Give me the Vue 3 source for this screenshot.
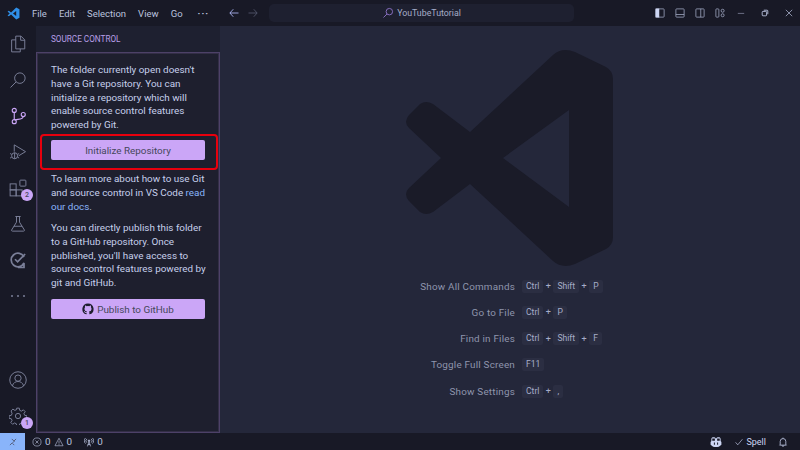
<script setup>
const menus = ['File', 'Edit', 'Selection', 'View', 'Go']

const shortcuts = [
  { label: 'Show All Commands', keys: ['Ctrl', 'Shift', 'P'] },
  { label: 'Go to File', keys: ['Ctrl', 'P'] },
  { label: 'Find in Files', keys: ['Ctrl', 'Shift', 'F'] },
  { label: 'Toggle Full Screen', keys: ['F11'] },
  { label: 'Show Settings', keys: ['Ctrl', ','] },
]
</script>

<template>
  <div class="window">
    <header class="titlebar">
      <svg class="app-logo" viewBox="0 0 24 24">
        <path fill="#2f8fe8" d="M17 1 23 4v16l-6 3L7.500 13.800l-4 3.200L1 15.500 5 12 1 8.500 3.500 7l4 3.200z" />
        <path fill="#181926" d="M17 7.500 11 12l6 4.500z" />
      </svg>
      <nav class="menu">
        <span v-for="item in menus" :key="item">{{ item }}</span>
        <span class="menu-more">···</span>
      </nav>
      <div class="nav-arrows">
        <svg viewBox="0 0 16 16" fill="none" stroke="#b4befe" stroke-width="1.100"><path d="M14 8H2.500M7 3 2.500 8 7 13" /></svg>
        <svg viewBox="0 0 16 16" fill="none" stroke="#565a70" stroke-width="1.100"><path d="M2 8h11.500M9 3l4.500 5L9 13" /></svg>
      </div>
      <div class="command-center">
        <svg viewBox="0 0 16 16" fill="none" stroke="#8f74c9" stroke-width="1.200"><circle cx="9.800" cy="6.200" r="4.300" /><path d="M6.700 9.300 2 14" /></svg>
        <span>YouTubeTutorial</span>
      </div>
      <div class="layout-icons">
        <svg viewBox="0 0 16 16" fill="none" stroke="#a6adc8"><rect x="2.500" y="2.500" width="11" height="11" rx="1" /><rect x="2" y="2" width="5" height="12" fill="#cdd6f4" stroke="none" /></svg>
        <svg viewBox="0 0 16 16" fill="none" stroke="#a6adc8"><rect x="2.500" y="2.500" width="11" height="11" rx="1" /><path d="M2.500 10h11" /></svg>
        <svg viewBox="0 0 16 16" fill="none" stroke="#a6adc8"><rect x="2.500" y="2.500" width="11" height="11" rx="1" /><path d="M9 2.500v11" /></svg>
        <svg viewBox="0 0 16 16" fill="none" stroke="#a6adc8"><rect x="2.500" y="2.500" width="4" height="11" rx="1" /><circle cx="11.500" cy="5" r="2" /><circle cx="11.500" cy="11" r="2" /></svg>
      </div>
      <div class="window-controls">
        <svg viewBox="0 0 10 10" fill="none" stroke="#7f849c"><path d="M1 5.500h8" /></svg>
        <svg viewBox="0 0 10 10" fill="none" stroke="#cdd6f4"><rect x="1.500" y="3" width="5.500" height="5.500" rx="1" /><path d="M3.500 1.500h4a1 1 0 0 1 1 1v4" /></svg>
        <svg viewBox="0 0 10 10" fill="none" stroke="#a6adc8"><path d="m1 1 8 8M9 1 1 9" /></svg>
      </div>
    </header>

    <div class="workbench">
      <aside class="activity-bar">
        <div class="activity-top">
          <svg viewBox="0 0 24 24" fill="none" stroke="#7a7f98" stroke-width="1.300"><path d="M9 1.500h7l5 5v12H9z" /><path d="M15.500 1.500v5.500H21" /><path d="M9 6.500H3.500v16H15v-4" /></svg>
          <svg viewBox="0 0 24 24" fill="none" stroke="#7a7f98" stroke-width="1.300"><circle cx="14.500" cy="9.500" r="7" /><path d="M9.500 14.500 2 22" /></svg>
          <svg viewBox="0 0 24 24" fill="none" stroke="#cba6f7" stroke-width="1.500"><circle cx="7" cy="4.500" r="2.700" /><circle cx="7" cy="19.500" r="2.700" /><circle cx="19" cy="10" r="2.700" /><path d="M7 7.200v9.600M19 12.700c0 3-4 3.500-7 3.800-2 .2-4 .7-4.500 .8" /></svg>
          <svg viewBox="0 0 24 24" fill="none" stroke="#7a7f98" stroke-width="1.300"><path d="M7 2.500v9M7 2.500l15 9-9 5.500" /><circle cx="7.500" cy="17" r="4" /><path d="M1.500 14l2 1.200M1.500 20l2-1M13.500 14l-2 1.200M13.500 20l-2-1M7.500 13v8" /></svg>
          <div class="activity-badged">
            <svg viewBox="0 0 24 24" fill="none" stroke="#7a7f98" stroke-width="1.300"><rect x="1.500" y="6.500" width="8" height="8" /><rect x="1.500" y="14.500" width="8" height="8" /><rect x="9.500" y="14.500" width="8" height="8" /><rect x="14.500" y="1.500" width="8" height="8" rx="1" /></svg>
            <span class="badge">2</span>
          </div>
          <svg viewBox="0 0 24 24" fill="none" stroke="#7a7f98" stroke-width="1.300"><path d="M8.500 2h7M10 2v7.500L3.500 20a1 1 0 0 0 1 1.500h15A1 1 0 0 0 20.500 20L14 9.500V2M6.500 15h11" /></svg>
          <svg viewBox="0 0 24 24" fill="none" stroke="#7a7f98" stroke-width="2.300"><path d="M20 8A9 9 0 1 0 20 16v6h-8" /><path d="m8 11 3.500 3.500L21.500 4" /></svg>
          <span class="activity-more"><i></i><i></i><i></i></span>
        </div>
        <div class="activity-bottom">
          <svg viewBox="0 0 24 24" fill="none" stroke="#7a7f98" stroke-width="1.300"><circle cx="12" cy="12" r="11" /><circle cx="12" cy="9.500" r="4.200" /><path d="M4.500 20c1-4.500 4.500-6 7.500-6s6.500 1.500 7.500 6" /></svg>
          <div class="activity-badged">
            <svg viewBox="0 0 24 24" fill="none" stroke="#7a7f98" stroke-width="1.300"><circle cx="12" cy="12" r="3.500" /><path d="M10.300 1.500h3.400l.6 3 2.300 1 2.600-1.700 2.400 2.400-1.700 2.600 1 2.300 3 .6v3.400l-3 .6-1 2.300 1.700 2.600-2.400 2.400-2.600-1.700-2.300 1-.6 3h-3.400l-.6-3-2.300-1-2.600 1.700-2.400-2.400 1.700-2.600-1-2.300-3-.6v-3.400l3-.6 1-2.300L2.800 5.200l2.400-2.400 2.600 1.700 2.300-1z" /></svg>
            <span class="badge">1</span>
          </div>
        </div>
      </aside>

      <section class="sidebar">
        <div class="sidebar-title">SOURCE CONTROL</div>
        <div class="welcome-panel">
          <p>The folder currently open doesn't have a Git repository. You can initialize a repository which will enable source control features powered by Git.</p>
          <div class="highlighted">
            <button class="action-btn">Initialize Repository</button>
            <span class="red-frame"></span>
          </div>
          <p>To learn more about how to use Git and source control in VS Code <a>read our docs</a>.</p>
          <p>You can directly publish this folder to a GitHub repository. Once published, you'll have access to source control features powered by git and GitHub.</p>
          <button class="action-btn publish-btn">
            <svg class="github-icon" viewBox="0 0 16 16"><path fill="#1e1e2e" d="M8 .5a7.500 7.500 0 0 0-2.400 14.600c.4.100.5-.2.500-.4v-1.400c-2.100.5-2.500-.9-2.500-.9-.3-.9-.8-1.100-.8-1.100-.7-.5 0-.5 0-.5.800.1 1.200.8 1.200.8.700 1.100 1.800.8 2.200.6.100-.5.300-.8.500-1-1.700-.2-3.400-.8-3.400-3.700 0-.8.300-1.500.8-2-.1-.2-.3-1 .1-2 0 0 .6-.2 2 .8a7 7 0 0 1 3.600 0c1.400-1 2-.8 2-.8.400 1 .2 1.800.1 2 .5.500.8 1.200.8 2 0 2.900-1.700 3.500-3.400 3.700.3.200.5.700.5 1.400v2.100c0 .2.100.5.500.4A7.500 7.500 0 0 0 8 .5z" /></svg>
            Publish to GitHub
          </button>
        </div>
      </section>

      <main class="editor">
        <svg class="watermark" viewBox="400 45 220 225">
          <path fill="#1a1b28" d="M553 55Q562 47 575 52L606 67Q613 71 613 79V237Q613 245 606 249L575 264Q562 269 553 261L470 184 433 212Q426 216 420 212L409 201Q403 194 409 188L441 158 409 128Q403 122 409 115L420 104Q426 100 433 104L470 132zM569 110 503 158 569 207z" fill-rule="evenodd" />
        </svg>
        <div class="shortcuts">
          <div v-for="row in shortcuts" :key="row.label" class="shortcut-row">
            <span class="shortcut-label">{{ row.label }}</span>
            <span class="shortcut-keys">
              <template v-for="(key, i) in row.keys" :key="key">
                <span v-if="i > 0" class="plus">+</span>
                <kbd>{{ key }}</kbd>
              </template>
            </span>
          </div>
        </div>
      </main>
    </div>

    <footer class="statusbar">
      <span class="remote">
        <svg viewBox="0 0 16 16" fill="none" stroke="#45475a" stroke-width="1.200"><path d="m3 13 4-4M6 3l4 4-2 2M13 3 9 7M10 13 7 10" /></svg>
      </span>
      <span class="status-item">
        <svg viewBox="0 0 16 16" fill="none" stroke="#bac2de"><circle cx="8" cy="8" r="6.500" /><path d="m5.500 5.500 5 5M10.500 5.500l-5 5" /></svg>
        0
        <svg viewBox="0 0 16 16" fill="none" stroke="#bac2de"><path d="M8 2 1.500 14h13zM8 6v4.500M8 11.500v1.500" /></svg>
        0
      </span>
      <span class="status-item ports">
        <svg viewBox="0 0 16 16" fill="none" stroke="#bac2de" stroke-width="1.200"><circle cx="8" cy="6" r="1.300" fill="#bac2de" /><path d="M8 7.500 5.500 15M8 7.500l2.500 7.500M6 12h4M4.500 9A4 4 0 0 1 4.500 3M11.500 9a4 4 0 0 0 0-6M2.500 10.500a6 6 0 0 1 0-9M13.500 10.500a6 6 0 0 0 0-9" /></svg>
        0
      </span>
      <span class="status-right">
        <svg class="copilot" viewBox="0 0 16 16"><path fill="#cdd6f4" d="M8 3.500C7 2 5.500 1.500 3.800 1.800 2.300 2.100 1.800 3.300 1.800 4.700v1.800L.8 8v3.500C3 13.800 5.500 14.800 8 14.800s5-1 7.200-3.300V8l-1-1.500V4.700c0-1.400-.5-2.600-2-2.900C10.500 1.500 9 2 8 3.500z" /><path fill="#181926" d="M3 3.300h3.500v3H3zM9.500 3.300H13v3H9.500zM5.200 8.500h1.300v3H5.200zM9.500 8.500h1.300v3H9.500z" /></svg>
        <span class="spell"><svg viewBox="0 0 16 16" fill="none" stroke="#cdd6f4"><path d="m2.500 8.500 3.500 4L13.500 3.500" /></svg>Spell</span>
        <svg viewBox="0 0 16 16" fill="none" stroke="#cdd6f4" stroke-width="1.200"><path d="M3.500 12V7a4.500 4.500 0 0 1 9 0v5l1 1h-11zM6.500 13.500a1.500 1.500 0 0 0 3 0M8 1v1.500" /></svg>
      </span>
    </footer>
  </div>
</template>

<style>
html, body {
  margin: 0;
  background: #181926;
}
</style>

<style scoped>
.window {
  width: 800px;
  height: 450px;
  display: flex;
  flex-direction: column;
  overflow: hidden;
  font-family: Roboto, "Noto Sans", sans-serif;
  font-size: 9.900px;
  color: #cdd6f4;
  background: #181926;
}

.titlebar {
  height: 26px;
  flex-shrink: 0;
  display: flex;
  align-items: center;
  background: #181926;
}

.app-logo {
  width: 13px;
  height: 13px;
  margin-left: 7px;
}

.menu {
  display: flex;
  gap: 12px;
  margin-left: 12px;
  width: 196px;
  font-size: 9.500px;
  color: #bac2de;
}

.menu-more {
  margin-left: 3px;
  font-weight: 700;
  letter-spacing: 1px;
}

.nav-arrows {
  display: flex;
  gap: 7px;
  width: 41px;
}

.nav-arrows svg {
  width: 12px;
  height: 12px;
}

.command-center {
  width: 305px;
  height: 18px;
  border-radius: 5px;
  background: #1e2030;
  display: flex;
  align-items: center;
  justify-content: center;
  gap: 3px;
  font-size: 8.800px;
  color: #a6adc8;
}

.command-center svg {
  width: 12px;
  height: 12px;
}

.layout-icons {
  display: flex;
  gap: 8px;
  margin-left: 80px;
}

.layout-icons svg {
  width: 12px;
  height: 12px;
}

.window-controls {
  display: flex;
  gap: 16px;
  margin-left: 11px;
}

.window-controls svg {
  width: 8px;
  height: 8px;
}

.workbench {
  flex: 1;
  min-height: 0;
  display: flex;
}

.activity-bar {
  width: 36px;
  flex-shrink: 0;
  display: flex;
  flex-direction: column;
  justify-content: space-between;
  align-items: center;
  background: #181926;
}

.activity-top,
.activity-bottom {
  display: flex;
  flex-direction: column;
  align-items: center;
}

.activity-top {
  gap: 18px;
  padding-top: 9px;
}

.activity-bottom {
  gap: 18px;
  padding-bottom: 8px;
}

.activity-bar svg {
  display: block;
  width: 18px;
  height: 18px;
}

.activity-badged {
  position: relative;
}

.badge {
  position: absolute;
  right: -6px;
  bottom: -4px;
  width: 12px;
  height: 12px;
  border-radius: 50%;
  background: #cba6f7;
  color: #45475a;
  font-size: 7px;
  font-weight: 500;
  line-height: 12px;
  text-align: center;
}

.activity-more {
  display: flex;
  gap: 4px;
  margin-top: 8px;
}

.activity-more i {
  width: 2px;
  height: 2px;
  border-radius: 50%;
  background: #7a7f98;
}

.sidebar {
  width: 184px;
  flex-shrink: 0;
  display: flex;
  flex-direction: column;
  background: #1e2030;
}

.sidebar-title {
  height: 26px;
  padding-left: 15px;
  line-height: 27px;
  font-size: 8.200px;
  color: #b79fe6;
}

.welcome-panel {
  flex: 1;
  padding: 10px 14px 0;
  background: #1e1f2e;
  border: 1px solid #4d4168;
  box-shadow: inset 0 0 0 1px #332e46;
}

p {
  margin: 0 -3px 7.750px 0;
  line-height: 13.750px;
  color: #c6cfec;
}

a {
  color: #89b4fa;
}

.highlighted {
  position: relative;
  margin-top: 8.250px;
  margin-bottom: 12px;
}

.action-btn {
  width: 100%;
  height: 20px;
  border: none;
  border-radius: 2px;
  padding: 0;
  display: flex;
  align-items: center;
  justify-content: center;
  gap: 3px;
  background: #cba6f7;
  color: #45475a;
  font-family: inherit;
  font-size: 9.900px;
}

.publish-btn {
  margin-top: 9.250px;
}

.github-icon {
  width: 12px;
  height: 12px;
}

.red-frame {
  position: absolute;
  left: -11px;
  right: -13px;
  top: -6px;
  bottom: -10px;
  border: 2.500px solid #e8000d;
  border-radius: 4px;
}

.editor {
  flex: 1;
  position: relative;
  background: #24273a;
}

.watermark {
  position: absolute;
  left: 180px;
  top: 19px;
  width: 220px;
  height: 225px;
}

.shortcuts {
  position: absolute;
  top: 247px;
  left: 0;
  width: 100%;
}

.shortcut-row {
  display: grid;
  grid-template-columns: 295px 1fr;
  column-gap: 7px;
  align-items: center;
  height: 26.250px;
}

.shortcut-label {
  text-align: right;
  color: #8f95ad;
  letter-spacing: 0.2px;
}

.shortcut-keys {
  display: flex;
  align-items: center;
}

kbd {
  height: 13px;
  min-width: 2px;
  padding: 0 4px;
  border-radius: 2px;
  background: #2b2e42;
  color: #a6adc8;
  font-family: inherit;
  font-size: 8.600px;
  line-height: 13px;
  text-align: center;
}

.plus {
  width: 10px;
  text-align: center;
  color: #a6adc8;
  font-size: 9px;
}

.statusbar {
  height: 17px;
  flex-shrink: 0;
  display: flex;
  align-items: center;
  background: #181926;
  color: #bac2de;
}

.statusbar svg {
  width: 10px;
  height: 10px;
}

.remote {
  width: 25px;
  height: 100%;
  background: #89b4fa;
  display: flex;
  align-items: center;
  justify-content: center;
}

.status-item {
  display: flex;
  align-items: center;
  gap: 3px;
  margin-left: 7px;
}

.status-item.ports {
  margin-left: 12px;
}

.status-right {
  margin-left: auto;
  display: flex;
  align-items: center;
  gap: 12px;
  padding-right: 12px;
  color: #cdd6f4;
}

.status-right .copilot {
  width: 12px;
  height: 12px;
}

.spell {
  display: flex;
  align-items: center;
  gap: 2px;
  font-size: 9px;
}
</style>
